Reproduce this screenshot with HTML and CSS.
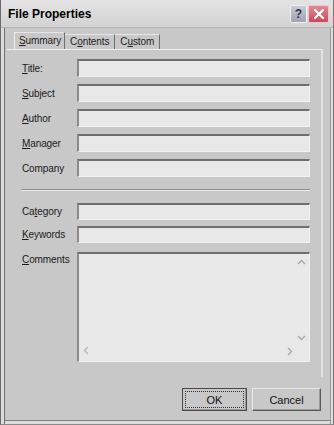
FILE: index.html
```html
<!DOCTYPE html>
<html lang="en">
<head>
    <meta charset="UTF-8">
    <title>File Properties</title>
    <link rel="stylesheet" href="styles.css">
</head>
<body>
    <div class="window">
        <div class="title-bar">
            <span class="title-text">File Properties</span>
            <div class="title-buttons">
                <span class="tb-btn tb-help">?</span>
                <span class="tb-btn tb-close">
                    <svg width="12" height="12" viewBox="0 0 12 12"><path d="M2 2 L10 10 M10 2 L2 10" stroke="#fff" stroke-width="2.2" stroke-linecap="round"/></svg>
                </span>
            </div>
        </div>

        <div class="dialog-body">
            <div class="tabs">
                <span class="tab active"><u>S</u>ummary</span>
                <span class="tab">C<u>o</u>ntents</span>
                <span class="tab">C<u>u</u>stom</span>
            </div>

            <div class="panel">
                <div class="form-group">
                    <label class="row"><span class="lbl"><u>T</u>itle:</span><span class="field"></span></label>
                    <label class="row"><span class="lbl"><u>S</u>ubject</span><span class="field"></span></label>
                    <label class="row"><span class="lbl"><u>A</u>uthor</span><span class="field"></span></label>
                    <label class="row"><span class="lbl"><u>M</u>anager</span><span class="field"></span></label>
                    <label class="row"><span class="lbl">Company</span><span class="field"></span></label>
                </div>

                <div class="separator"></div>

                <div class="form-group second">
                    <label class="row short"><span class="lbl">Ca<u>t</u>egory</span><span class="field"></span></label>
                    <label class="row short"><span class="lbl"><u>K</u>eywords</span><span class="field"></span></label>
                    <label class="row comments"><span class="lbl"><u>C</u>omments</span>
                        <span class="field area">
                            <svg class="arr arr-up" width="9" height="6" viewBox="0 0 9 6"><path d="M1 5 L4.5 1.5 L8 5" fill="none" stroke="#a8a8a8" stroke-width="1.4"/></svg>
                            <svg class="arr arr-down" width="9" height="6" viewBox="0 0 9 6"><path d="M1 1 L4.5 4.5 L8 1" fill="none" stroke="#a8a8a8" stroke-width="1.4"/></svg>
                            <svg class="arr arr-left" width="6" height="9" viewBox="0 0 6 9"><path d="M5 1 L1.5 4.5 L5 8" fill="none" stroke="#b8b8b8" stroke-width="1.4"/></svg>
                            <svg class="arr arr-right" width="6" height="9" viewBox="0 0 6 9"><path d="M1 1 L4.5 4.5 L1 8" fill="none" stroke="#a8a8a8" stroke-width="1.4"/></svg>
                        </span>
                    </label>
                </div>
            </div>

            <div class="buttons">
                <button class="btn default"><span>OK</span></button>
                <button class="btn">Cancel</button>
            </div>
        </div>
    </div>
</body>
</html>
```

FILE: styles.css
```css
body {
    margin: 0;
    padding: 0;
    background-color: #c8c8c8;
    font-family: "Liberation Sans", Arial, sans-serif;
    font-size: 10px;
    color: #111;
}

.window {
    width: 334px;
    height: 425px;
    box-sizing: border-box;
    display: flex;
    flex-direction: column;
    background-color: #c8c8c8;
    border-left: 1px solid #6a6a6a;
    border-right: 1px solid #7a7a7a;
    border-bottom: 1px solid #8a8a8a;
    box-shadow: inset 3px 0 0 #dcdcdc, inset 4px 0 0 #707070, inset -2px 0 0 #dcdcdc, inset -3px 0 0 #9a9a9a, inset 0 -3px 0 #dcdcdc, inset 0 -4px 0 #808080;
}

.title-bar {
    height: 27px;
    display: flex;
    align-items: center;
    justify-content: space-between;
    padding: 0 4px 0 7px;
    background: linear-gradient(#e4e4e4, #d2d2d2);
    border-bottom: 1px solid #b4b4b4;
}

.title-text {
    font-weight: bold;
    font-size: 12px;
    color: #000;
}

.title-buttons {
    display: flex;
    gap: 1px;
}

.tb-btn {
    width: 15px;
    height: 16px;
    display: flex;
    align-items: center;
    justify-content: center;
    border-radius: 2px;
}

.tb-help {
    background: linear-gradient(#c8ccd8, #9ea4b4);
    border: 1px solid #eef0f4;
    color: #333;
    font-weight: bold;
    font-size: 12px;
}

.tb-close {
    width: 19px;
    background: linear-gradient(#e28a96, #c9485a);
    border: 1px solid #f0c4c8;
}

.dialog-body {
    flex: 1;
    display: flex;
    flex-direction: column;
    padding: 6px 10px 0 6px;
}

.tabs {
    display: flex;
    padding-left: 7px;
    height: 15px;
    align-items: flex-end;
}

.tab {
    padding: 0 5px 1px 5px;
    border-right: 1px solid #6e6e6e;
    border-top: 1px solid #e6e6e6;
    height: 13px;
    line-height: 13px;
    color: #222;
    letter-spacing: -0.1px;
}

.tab:first-child {
    border-left: 1px solid #eeeeee;
}

.tab.active {
    height: 15px;
    line-height: 16px;
    padding: 0 3px 1px 4px;
}

.panel {
    border-top: 1px solid #f0f0f0;
    border-right: 2px solid #e2e2e2;
    padding: 9px 5px 0 15px;
    height: 328px;
    box-sizing: border-box;
}

.form-group {
    display: flex;
    flex-direction: column;
    gap: 7px;
}

.row {
    display: flex;
    align-items: center;
}

.lbl {
    width: 55px;
    color: #1a1a1a;
    letter-spacing: -0.1px;
}

.field {
    width: 233px;
    height: 18px;
    box-sizing: border-box;
    background-color: #e8e8e8;
    border-top: 2px solid #6e6e6e;
    border-left: 2px solid #8a8a8a;
    border-bottom: 1px solid #f2f2f2;
    border-right: 1px solid #f0f0f0;
}

.separator {
    margin: 12px 6px 0 -1px;
    border-top: 1px solid #8e8e8e;
    border-bottom: 1px solid #ececec;
}

.form-group.second {
    margin-top: 12px;
    gap: 6px;
}

.row.short .field {
    height: 17px;
}

.row.comments {
    align-items: flex-start;
    margin-top: 3px;
}

.row.comments .lbl {
    padding-top: 2px;
}

.field.area {
    height: 110px;
    position: relative;
}

.arr {
    position: absolute;
}

.arr-up {
    right: 3px;
    top: 5px;
}

.arr-down {
    right: 3px;
    top: 81px;
}

.arr-left {
    left: 4px;
    bottom: 6px;
}

.arr-right {
    right: 16px;
    bottom: 5px;
}

.buttons {
    display: flex;
    justify-content: flex-end;
    gap: 5px;
    margin-top: 11px;
    padding-right: 2px;
}

.btn {
    font-family: "Liberation Sans", Arial, sans-serif;
    font-size: 11px;
    color: #111;
    height: 23px;
    background-color: #c8c8c8;
    border: 1px solid #5a5a5a;
    border-top-color: #e8e8e8;
    border-left-color: #e8e8e8;
    box-shadow: inset -1px -1px 0 #9a9a9a;
    padding: 0;
}

.btn.default {
    width: 65px;
    border: 1px solid #4a4a4a;
    padding: 2px;
}

.btn.default span {
    display: flex;
    align-items: center;
    justify-content: center;
    height: 100%;
    border: 1px dotted #333;
    box-sizing: border-box;
}

.btn:last-child {
    width: 69px;
}
```
